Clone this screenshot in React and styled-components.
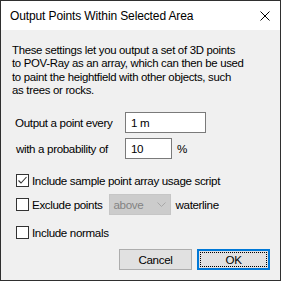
import React from "react";
import styled, { createGlobalStyle } from "styled-components";

const Global = createGlobalStyle`
  html, body { margin: 0; padding: 0; background: #ffffff; }
  * { box-sizing: border-box; }
`;

const Window = styled.div`
  width: 281px;
  height: 281px;
  border: 1px solid #2f2f2f;
  background: #f0f0f0;
  display: flex;
  flex-direction: column;
  font-family: "Liberation Sans", Arial, sans-serif;
  font-size: 11.6px;
  letter-spacing: -0.35px;
  color: #000;
`;

const TitleBar = styled.div`
  height: 29px;
  background: #ffffff;
  display: flex;
  align-items: center;
  justify-content: space-between;
  padding: 0 10px 0 9px;
  flex: none;
`;

const Title = styled.span`
  font-size: 12px;
  letter-spacing: -0.12px;
`;

const Body = styled.div`
  flex: 1;
  display: flex;
  flex-direction: column;
  padding: 14px 10px 0 11px;
`;

const Para = styled.p`
  margin: 0;
  line-height: 13.3px;
  font-size: 11.4px;
  letter-spacing: -0.3px;
`;

const FieldRow = styled.div`
  display: flex;
  align-items: center;
  height: 21px;
  margin-top: ${(p) => p.$mt}px;
`;

const Label = styled.span`
  width: 113px;
  padding-left: ${(p) => p.$pl}px;
`;

const TextInput = styled.div`
  width: ${(p) => p.$w}px;
  height: 21px;
  border: 1px solid #7a7a7a;
  background: #fff;
  display: flex;
  align-items: center;
  padding-left: 5px;
`;

const Unit = styled.span`
  margin-left: 5px;
`;

const CheckRow = styled.div`
  display: flex;
  align-items: center;
  height: ${(p) => p.$h}px;
  margin-top: ${(p) => p.$mt}px;
  padding-left: 4px;
`;

const Box = styled.span`
  width: 13px;
  height: 13px;
  border: 1px solid #333;
  background: #fff;
  flex: none;
  display: flex;
  align-items: center;
  justify-content: center;
  margin-right: 3px;
`;

const Select = styled.div`
  width: 62px;
  height: 21px;
  margin: 0 5px 0 6px;
  background: #cccccc;
  border: 1px solid #c6c6c6;
  display: flex;
  align-items: center;
  justify-content: space-between;
  padding: 0 4px 0 4px;
  color: #838383;
`;

const Buttons = styled.div`
  display: flex;
  justify-content: flex-end;
  gap: 5px;
  margin-top: 10px;
`;

const Button = styled.div`
  width: 73px;
  height: 21px;
  display: flex;
  align-items: center;
  justify-content: center;
  background: #e1e1e1;
  border: 1px solid #adadad;
  position: relative;
  ${(p) =>
    p.$default &&
    `
    border: 2px solid #0078d7;
    &::after {
      content: "";
      position: absolute;
      inset: 1px;
      border: 1px dotted #000;
    }
  `}
`;

function CheckBox({ checked }) {
  return (
    <Box>
      {checked && (
        <svg width="11" height="11" viewBox="0 0 11 11">
          <path d="M1.5 5.5 L4 8 L9.5 2" fill="none" stroke="#333" strokeWidth="1.1" />
        </svg>
      )}
    </Box>
  );
}

export default function App() {
  return (
    <>
      <Global />
      <Window>
        <TitleBar>
          <Title>Output Points Within Selected Area</Title>
          <svg width="10" height="10" viewBox="0 0 10 10">
            <path d="M0.5 0.5 L9.5 9.5 M9.5 0.5 L0.5 9.5" stroke="#000" strokeWidth="1" />
          </svg>
        </TitleBar>
        <Body>
          <Para>
            These settings let you output a set of 3D points
            <br />
            to POV-Ray as an array, which can then be used
            <br />
            to paint the heightfield with other objects, such
            <br />
            as trees or rocks.
          </Para>
          <FieldRow $mt={15}>
            <Label $pl={3}>Output a point every</Label>
            <TextInput $w={81}>1 m</TextInput>
          </FieldRow>
          <FieldRow $mt={5}>
            <Label $pl={4}>with a probability of</Label>
            <TextInput $w={47}>10</TextInput>
            <Unit>%</Unit>
          </FieldRow>
          <CheckRow $h={13} $mt={15}>
            <CheckBox checked />
            Include sample point array usage script
          </CheckRow>
          <CheckRow $h={21} $mt={7}>
            <CheckBox />
            Exclude points
            <Select>
              <span>above</span>
              <svg width="9" height="5" viewBox="0 0 9 5">
                <path d="M0.5 0.5 L4.5 4.5 L8.5 0.5" fill="none" stroke="#a8a8a8" strokeWidth="1" />
              </svg>
            </Select>
            waterline
          </CheckRow>
          <CheckRow $h={13} $mt={11}>
            <CheckBox />
            Include normals
          </CheckRow>
          <Buttons>
            <Button>Cancel</Button>
            <Button $default>OK</Button>
          </Buttons>
        </Body>
      </Window>
    </>
  );
}
